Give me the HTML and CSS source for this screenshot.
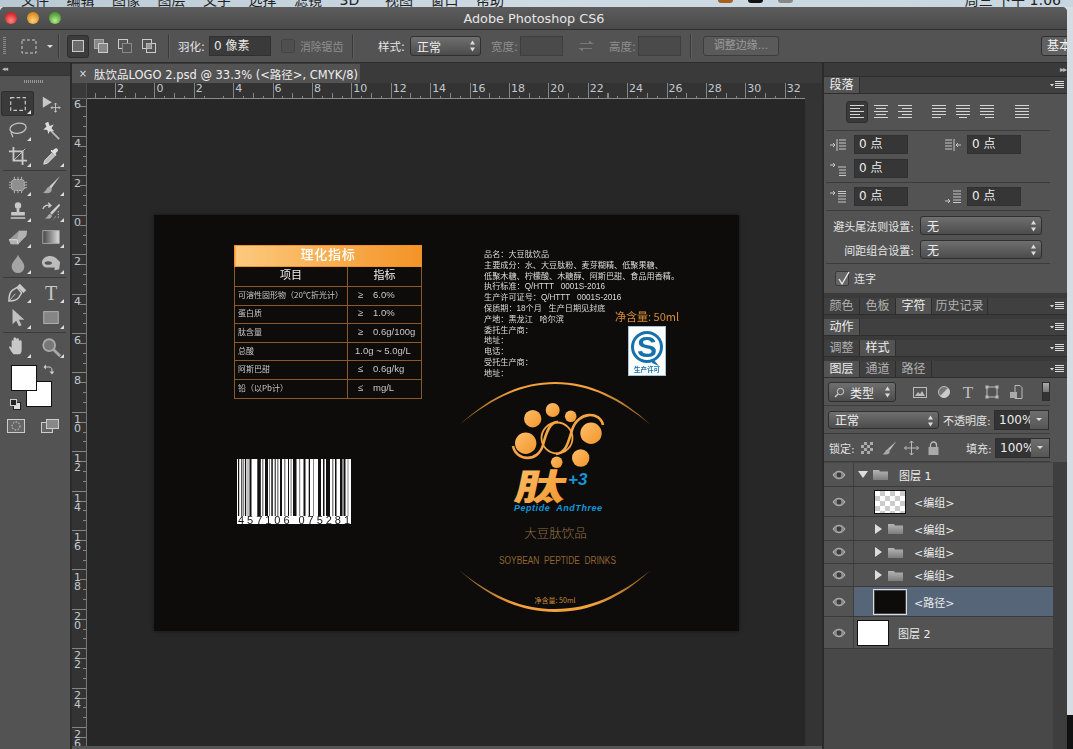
FILE: index.html
```html
<!DOCTYPE html>
<html lang="zh">
<head>
<meta charset="utf-8">
<title>Adobe Photoshop CS6</title>
<link rel="stylesheet" href="styles.css">
</head>
<body>
<svg class="defs" width="0" height="0">
  <defs>
    <linearGradient id="gOrange" x1="0" y1="0" x2="1" y2="1"><stop offset="0" stop-color="#fdbf6a"/><stop offset="1" stop-color="#f3952b"/></linearGradient>
    <linearGradient id="gFolder" x1="0" y1="0" x2="0" y2="1"><stop offset="0" stop-color="#b4b4b4"/><stop offset="1" stop-color="#7d7d7d"/></linearGradient>
    <linearGradient id="gGrad" x1="0" y1="0" x2="1" y2="0"><stop offset="0" stop-color="#444"/><stop offset="1" stop-color="#ddd"/></linearGradient>
    <linearGradient id="gArc" x1="0" y1="0" x2="1" y2="0"><stop offset="0" stop-color="#8a5a22"/><stop offset=".3" stop-color="#f4a23c"/><stop offset=".7" stop-color="#f4a23c"/><stop offset="1" stop-color="#8a5a22"/></linearGradient>
    <symbol id="menu" viewBox="0 0 14 8"><path d="M0 3h4L2 5.500z" fill="#ddd"/><path d="M5 .5h9M5 2.500h9M5 4.500h9M5 6.500h9" stroke="#ddd" stroke-width="1"/></symbol>
    <symbol id="updown" viewBox="0 0 7 12"><path d="M3.500 .5 6 4.500H1zM3.500 11.500 1 7.500h5z" fill="#ddd"/></symbol>
    <symbol id="eye" viewBox="0 0 14 10"><path d="M1 5c3-5 9-5 12 0-3 5-9 5-12 0z" fill="#8d8d8d" stroke="#b5b5b5"/><circle cx="7" cy="5" r="2.400" fill="#3d3d3d"/></symbol>
    <symbol id="folder" viewBox="0 0 15 11"><path d="M0 1h6l1 1.500h8V11H0z" fill="url(#gFolder)"/></symbol>
  </defs>
</svg>

<div class="desk-menu">
  <span>文件</span><span>编辑</span><span>图像</span><span>图层</span><span>文字</span><span>选择</span><span>滤镜</span><span>3D</span><span>视图</span><span>窗口</span><span>帮助</span>
  <div class="desk-status"><i class="st-orange"></i><i class="st-black"></i><i class="st-gray"></i><b>周三 下午 1:06</b></div>
</div>

<div class="screen">
<div class="window">
  <header class="titlebar">
    <div class="lights"><i class="red"></i><i class="amber"></i><i class="green"></i></div>
    <h1>Adobe Photoshop CS6</h1>
  </header>

  <div class="options">
    <i class="grip"></i>
    <svg class="op-marquee" width="16" height="15" viewBox="0 0 16 15"><rect x="1" y="1" width="14" height="13" fill="none" stroke="#ccc" stroke-dasharray="3 2"/></svg>
    <i class="op-caret"></i>
    <i class="vsep s1"></i>
    <span class="op-btn on"><svg width="12" height="12" viewBox="0 0 12 12"><rect x=".5" y=".5" width="11" height="11" fill="#6a6a6a" stroke="#ccc"/></svg></span>
    <span class="op-btn"><svg width="14" height="14" viewBox="0 0 14 14"><rect x=".5" y=".5" width="9" height="9" fill="#888" stroke="#aaa"/><rect x="4.500" y="4.500" width="9" height="9" fill="#888" stroke="#ccc"/></svg></span>
    <span class="op-btn"><svg width="14" height="14" viewBox="0 0 14 14"><rect x=".5" y=".5" width="9" height="9" fill="#555" stroke="#ccc"/><rect x="4.500" y="4.500" width="9" height="9" fill="#535353" stroke="#888"/></svg></span>
    <span class="op-btn"><svg width="14" height="14" viewBox="0 0 14 14"><rect x=".5" y=".5" width="9" height="9" fill="none" stroke="#ccc"/><rect x="4.500" y="4.500" width="9" height="9" fill="none" stroke="#ccc"/><rect x="4.500" y="4.500" width="5" height="5" fill="#999"/></svg></span>
    <i class="vsep s2"></i>
    <label class="op-label feather">羽化:</label>
    <span class="op-input w-feather">0 像素</span>
    <i class="op-check"></i>
    <span class="op-label dim aa">消除锯齿</span>
    <i class="vsep s3"></i>
    <label class="op-label style">样式:</label>
    <span class="select w-style">正常<svg class="ud" width="7" height="12"><use href="#updown"/></svg></span>
    <span class="op-label dim wd">宽度:</span>
    <span class="op-input w-size off"></span>
    <svg class="swap" width="18" height="14" viewBox="0 0 18 14"><path d="M3 4h9V1.500L17 5l-5 0H3zM15 10H6v2.500L1 9l5 0h9z" fill="#777"/></svg>
    <span class="op-label dim ht">高度:</span>
    <span class="op-input w-size off"></span>
    <i class="vsep s4"></i>
    <span class="op-button">调整边缘...</span>
    <span class="op-work">基本</span>
  </div>

  <div class="main">
    <aside class="toolbar">
      <div class="tb-top">◂◂</div>
      <i class="tb-grip"></i>
      <div class="tools">
        <span class="tool on"><svg viewBox="0 0 22 22"><rect x="3" y="4" width="16" height="14" fill="none" stroke="#ccc" stroke-width="1.300" stroke-dasharray="4 2.500"/></svg></span>
        <span class="tool bare"><svg viewBox="0 0 22 22"><path d="M2 3l10 6-10 6z" fill="#c8c8c8"/><path d="M16 10v10M11 15h10M14.500 11.500 16 10l1.500 1.500M14.500 18.500 16 20l1.500-1.500M12.500 13.500 11 15l1.500 1.500M19.500 13.500 21 15l-1.500 1.500" stroke="#ccc" fill="none"/></svg></span>
        <span class="tool"><svg viewBox="0 0 22 22"><ellipse cx="11" cy="9" rx="9" ry="5.500" transform="rotate(-10 11 9)" fill="none" stroke="#c4c4c4" stroke-width="1.400"/><path d="M4 13c-2 3 2 3 1 6" fill="none" stroke="#c4c4c4" stroke-width="1.400"/></svg></span>
        <span class="tool bare"><svg viewBox="0 0 22 22"><path d="M9 10l11 11" stroke="#bbb" stroke-width="2"/><path d="M8 2l1.500 4.500L14 5l-2.500 4 3 3.500-4.500-.7L8 15.500 7 11l-4.500-.5L6 7.500 4.500 3.500z" fill="#ddd"/></svg></span>
        <span class="tool"><svg viewBox="0 0 22 22"><path d="M6 1v15h15M1 6h15v15" fill="none" stroke="#c8c8c8" stroke-width="2"/><path d="M6 16 19 3" stroke="#c8c8c8"/></svg></span>
        <span class="tool"><svg viewBox="0 0 22 22"><path d="M3 20l1-4 8-8 3 3-8 8z" fill="#bbb" stroke="#e0e0e0"/><path d="M11 6l5 5 1-1-1-2 2-2c2-2-1-5-3-3l-2 2-2-1z" fill="#e0e0e0"/></svg></span>
        <i class="t-sep"></i>
        <span class="tool"><svg viewBox="0 0 22 22"><rect x="4" y="5" width="14" height="12" rx="3" fill="#8f8f8f" stroke="#c8c8c8" stroke-dasharray="2 1"/><path d="M7 2v3M11 2v3M15 2v3M7 17v3M11 17v3M15 17v3M1 8h3M1 11h3M1 14h3M18 8h3M18 11h3M18 14h3" stroke="#bbb"/></svg></span>
        <span class="tool"><svg viewBox="0 0 22 22"><path d="M21 1 9 13l2 2z" fill="#d0d0d0"/><path d="M9 13c-4 1-2 5-7 6 5 2 10 1 10-4z" fill="#a8a8a8"/></svg></span>
        <span class="tool"><svg viewBox="0 0 22 22"><circle cx="11" cy="5" r="3.500" fill="#c8c8c8"/><path d="M9.500 8h3v4h6v4H3.500v-4h6zM3 18h16v1.500H3z" fill="#c8c8c8"/></svg></span>
        <span class="tool"><svg viewBox="0 0 22 22"><path d="M20 3 10 13l2 2L21 5z" fill="#d0d0d0"/><path d="M10 14c-3 1-2 4-6 5 4 1 8 1 8-3z" fill="#aaa"/><path d="M2 9c1-4 5-5 8-4M8 2l3 3-3 2" fill="none" stroke="#ccc" stroke-width="1.400"/><path d="M19 11v8M16 17l-2 3" stroke="#ccc" stroke-dasharray="1.500 1.500"/></svg></span>
        <span class="tool"><svg viewBox="0 0 22 22"><path d="M1 14 12 4h9l-1 6-9 9H3z" fill="#9a9a9a"/><path d="M1 14h9l2-10h9l-1 6-9 9H3z" fill="#bcbcbc" opacity=".7"/><path d="M1 14h9l1 5" fill="none" stroke="#e0e0e0"/></svg></span>
        <span class="tool"><svg viewBox="0 0 22 22"><rect x="2" y="4" width="18" height="14" fill="url(#gGrad)" stroke="#aaa"/></svg></span>
        <span class="tool"><svg viewBox="0 0 22 22"><path d="M11 2c2 5 7 8 7 13a7 7 0 0 1-14 0c0-5 5-8 7-13z" fill="#a4a4a4"/></svg></span>
        <span class="tool"><svg viewBox="0 0 22 22"><path d="M1 10c1-6 8-8 13-6 3 1 5 4 7 6l-1 8-5 1v-3H6c-3 0-5-3-5-6z" fill="#bdbdbd"/><ellipse cx="8" cy="11" rx="4" ry="2" fill="#555"/></svg></span>
        <i class="t-sep"></i>
        <span class="tool"><svg viewBox="0 0 22 22"><path d="M1 21c0-5 1-10 4-12l5-3 5 6-3 5c-2 3-6 4-11 4z" fill="none" stroke="#d0d0d0" stroke-width="1.500"/><path d="M1 21 8 13" stroke="#d0d0d0"/><path d="M10 5l3-3 7 7-3 3z" fill="#c8c8c8"/></svg></span>
        <span class="tool"><svg viewBox="0 0 22 22"><text class="t-glyph" x="11" y="20" text-anchor="middle">T</text></svg></span>
        <span class="tool"><svg viewBox="0 0 22 22"><path d="M5 1v17l4-4 3 6 3-1-3-6h6z" fill="#c0c0c0"/></svg></span>
        <span class="tool"><svg viewBox="0 0 22 22"><rect x="3" y="4" width="16" height="13" fill="#858585" stroke="#b5b5b5"/></svg></span>
        <i class="t-sep"></i>
        <span class="tool"><svg viewBox="0 0 22 22"><path d="M6 19c-2-2-4-6-5-8 0-1 2-1 3 1V5c0-2 2-2 2 0V2c0-2 3-2 3 0v1c0-2 3-2 3 0v2c0-2 3-2 3 0v9c0 3-1 4-2 5z" fill="#c8c8c8"/></svg></span>
        <span class="tool"><svg viewBox="0 0 22 22"><circle cx="9" cy="9" r="6.500" fill="#777" stroke="#aaa" stroke-width="2"/><path d="M14 14l7 7" stroke="#aaa" stroke-width="3"/></svg></span>
      </div>
      <div class="swatches">
        <i class="sw-bg"></i><i class="sw-fg"></i>
        <svg class="sw-swap" width="11" height="11" viewBox="0 0 11 11"><path d="M1 3h5c2 0 3 1 3 3v2" fill="none" stroke="#ccc"/><path d="M3 .5v5L.5 3zM6.500 7.500h5L9 10.500z" fill="#ccc"/></svg>
        <i class="sw-d1"></i><i class="sw-d2"></i>
      </div>
      <div class="tb-modes">
        <svg width="18" height="14" viewBox="0 0 18 14"><rect x=".5" y=".5" width="17" height="13" fill="#666" stroke="#ccc"/><circle cx="9" cy="7" r="4" fill="none" stroke="#ddd" stroke-dasharray="1.500 1.500"/></svg>
        <svg width="18" height="14" viewBox="0 0 18 14"><rect x=".5" y="3.500" width="11" height="10" fill="#666" stroke="#ccc"/><rect x="5.500" y=".5" width="12" height="9" fill="#888" stroke="#ccc"/></svg>
      </div>
    </aside>

    <section class="docarea">
      <div class="doctabs">
        <div class="doctab"><i>×</i><span>肽饮品LOGO 2.psd @ 33.3% (&lt;路径&gt;, CMYK/8)</span></div>
      </div>
      <div class="hrow">
        <i class="corner"></i>
        <div class="hruler">
          <span>2</span><span>0</span><span>2</span><span>4</span><span>6</span><span>8</span><span>10</span><span>12</span><span>14</span><span>16</span><span>18</span><span>20</span><span>22</span><span>24</span><span>26</span><span>28</span><span>30</span><span>32</span>
        </div>
        <i class="hrest"></i>
      </div>
      <div class="work">
        <div class="vruler">
          <span>6</span><span>4</span><span>2</span><span>0</span><span>2</span><span>4</span><span>6</span><span>8</span><span>1<br>0</span><span>1<br>2</span><span>1<br>4</span><span>1<br>6</span><span>1<br>8</span><span>2<br>0</span><span>2<br>2</span><span>2<br>4</span><span>2<br>6</span>
        </div>
        <div class="canvas">
          <div class="doc">
            <table class="spec">
              <colgroup><col class="c1"><col class="c2"></colgroup>
              <thead>
                <tr><th colspan="2" class="spec-title">理化指标</th></tr>
                <tr class="spec-head"><th>项目</th><th>指标</th></tr>
              </thead>
              <tbody>
                <tr><td>可溶性固形物（20℃折光计）</td><td class="v"><em>≥</em>6.0%</td></tr>
                <tr><td>蛋白质</td><td class="v"><em>≥</em>1.0%</td></tr>
                <tr><td>肽含量</td><td class="v"><em>≥</em>0.6g/100g</td></tr>
                <tr><td>总酸</td><td class="r">1.0g ~ 5.0g/L</td></tr>
                <tr><td>阿斯巴甜</td><td class="v"><em>≤</em>0.6g/kg</td></tr>
                <tr><td>铅（以Pb计）</td><td class="v"><em>≤</em>mg/L</td></tr>
              </tbody>
            </table>

            <div class="info">
              <p>品名：大豆肽饮品</p>
              <p>主要成分：水、大豆肽粉、麦芽糊精、低聚果糖、</p>
              <p>低聚木糖、柠檬酸、木糖醇、阿斯巴甜、食品用香精。</p>
              <p>执行标准：Q/HTTT&nbsp;&nbsp; 0001S-2016</p>
              <p>生产许可证号：Q/HTTT&nbsp;&nbsp; 0001S-2016</p>
              <p>保质期：18个月&nbsp;&nbsp; 生产日期见封底</p>
              <p>产地：黑龙江&nbsp;&nbsp;&nbsp;哈尔滨</p>
              <p>委托生产商：</p>
              <p>地址：</p>
              <p>电话：</p>
              <p>受托生产商：</p>
              <p>地址：</p>
            </div>

            <div class="net">净含量: 50ml</div>

            <svg class="qs" viewBox="0 0 38 50">
              <rect x=".5" y=".5" width="37" height="49" fill="#fff" stroke="#9fc4dc"/>
              <circle cx="19" cy="21" r="14.500" fill="#fff" stroke="#1571ab" stroke-width="3"/>
              <path d="M25 33l6 7-7-3z" fill="#1571ab"/>
              <text class="qs-s" x="19" y="31" text-anchor="middle">S</text>
              <text class="qs-t" x="19" y="46" text-anchor="middle">生产许可</text>
            </svg>

            <svg class="barcode" viewBox="0 0 114 65">
              <rect width="114" height="65" fill="#fff"/>
              <g fill="#111">
                <rect x="1" width="1.200" height="57"/><rect x="4.300" width="1" height="57"/><rect x="8" width="1.200" height="57"/><rect x="12.500" width="2" height="57"/><rect x="20.300" width="3.500" height="57"/><rect x="28" width="3" height="57"/><rect x="34.300" width="1.500" height="57"/><rect x="37.700" width="1" height="57"/><rect x="43" width="2" height="57"/><rect x="51" width="1" height="57"/><rect x="56" width="3.500" height="57"/><rect x="66.500" width="2" height="57"/><rect x="71.700" width="1.300" height="57"/><rect x="81" width="3" height="57"/><rect x="86" width="1.500" height="57"/><rect x="89" width="4" height="57"/><rect x="98" width="1.500" height="57"/><rect x="103" width="2.500" height="57"/><rect x="106.500" width="2" height="57"/>
              </g>
              <g fill="#888">
                <rect x="6" width="1.200" height="57"/><rect x="10.500" width="1" height="57"/><rect x="25" width="1.500" height="57"/><rect x="32" width="1" height="57"/><rect x="40" width="1.500" height="57"/><rect x="47" width="1.500" height="57"/><rect x="53.500" width="1.200" height="57"/><rect x="62" width="1.200" height="57"/><rect x="76" width="1" height="57"/><rect x="95" width="1.500" height="57"/><rect x="110.500" width="1" height="57"/>
              </g>
              <text class="bc-num" x="1" y="65" textLength="112">457106 075281</text>
            </svg>

            <svg class="mark" viewBox="0 0 210 240">
              <path d="M9 50C40 22 70 7 105 7c35 0 66 15 96 43C170 25 140 9 105 9 70 9 40 25 9 50z" fill="url(#gArc)"/>
              <path d="M9 195c31 25 61 39 96 39 35 0 65-14 96-39-30 28-61 42-96 42-35 0-65-14-96-42z" fill="url(#gArc)"/>
              <g fill="none" stroke="#f5a543">
                <path d="M63 71c3 15 25 17 30-1 3-12 7-24 15-23" stroke-width="2.600"/>
                <path d="M153 50c-3-14-25-14-31 5-4 13-6 23-16 24" stroke-width="2.600"/>
                <circle cx="107" cy="63" r="15.500" stroke-width="1.800"/>
              </g>
              <g fill="url(#gOrange)">
                <circle cx="82.700" cy="43.700" r="8.700"/><circle cx="102.700" cy="35" r="7"/><circle cx="120.700" cy="41.300" r="5.800"/><circle cx="141" cy="58.300" r="10.700"/><circle cx="75.700" cy="68.300" r="10.700"/><circle cx="130.700" cy="83" r="8.700"/><circle cx="106.700" cy="87.300" r="5.800"/>
              </g>
              <text class="m-char" x="0" y="0" transform="translate(63 125) skewX(-12) scale(1.150 .82)">肽</text>
              <text class="m-plus" x="118" y="110">+3</text>
              <text class="m-en" x="64" y="136" textLength="88">Peptide&#160;&#160;AndThree</text>
              <text class="m-cn" x="105.500" y="163" text-anchor="middle">大豆肽饮品</text>
              <text class="m-soy" x="49" y="189" textLength="117" lengthAdjust="spacingAndGlyphs">SOYBEAN&#160;&#160;PEPTIDE&#160;&#160;DRINKS</text>
              <text class="m-net" x="105" y="228" text-anchor="middle">净含量: 50ml</text>
            </svg>
          </div>
        </div>
        <i class="scrollcol"></i>
      </div>
      <i class="docfoot"></i>
    </section>

    <aside class="dock">
      <div class="dock-top">▸▸</div>

      <div class="group g-para">
        <div class="tabs"><span class="tab on">段落</span><svg class="pmenu"><use href="#menu"/></svg></div>
        <div class="body">
          <div class="p-align psec">
            <span class="al on"><svg viewBox="0 0 14 16"><path d="M0 1.500h14M0 4.500h10M0 7.500h14M0 10.500h10M0 13.500h14"/></svg></span>
            <span class="al"><svg viewBox="0 0 14 16"><path d="M0 1.500h14M2 4.500h10M0 7.500h14M2 10.500h10M0 13.500h14"/></svg></span>
            <span class="al"><svg viewBox="0 0 14 16"><path d="M0 1.500h14M4 4.500h10M0 7.500h14M4 10.500h10M0 13.500h14"/></svg></span>
            <span class="al gap"><svg viewBox="0 0 14 16"><path d="M0 1.500h14M0 4.500h14M0 7.500h14M0 10.500h14M0 13.500h9"/></svg></span>
            <span class="al"><svg viewBox="0 0 14 16"><path d="M0 1.500h14M0 4.500h14M0 7.500h14M0 10.500h14M3 13.500h8"/></svg></span>
            <span class="al"><svg viewBox="0 0 14 16"><path d="M0 1.500h14M0 4.500h14M0 7.500h14M0 10.500h14M5 13.500h9"/></svg></span>
            <span class="al gap2"><svg viewBox="0 0 14 16"><path d="M0 1.500h14M0 4.500h14M0 7.500h14M0 10.500h14M0 13.500h14"/></svg></span>
          </div>
          <div class="psec p-rows">
            <div class="prow">
              <svg class="pi" viewBox="0 0 16 14"><path d="M0 7h5M3 5l2 2-2 2M7 1v12M9 2h7M9 5h7M9 8h7M9 11h7" /></svg>
              <span class="num">0 点</span>
              <svg class="pi right" viewBox="0 0 16 14"><path d="M0 2h7M0 5h7M0 8h7M0 11h7M9 1v12M16 7h-5M13 5l-2 2 2 2"/></svg>
              <span class="num">0 点</span>
            </div>
            <div class="prow">
              <svg class="pi" viewBox="0 0 16 14"><path d="M0 3h5M3 1l2 2-2 2M8 5h8M9 8h7M9 11h7M9 13.500h7"/></svg>
              <span class="num">0 点</span>
            </div>
          </div>
          <div class="psec p-rows">
            <div class="prow">
              <svg class="pi" viewBox="0 0 16 14"><path d="M0 3h5M3 1l2 2-2 2M8 1.500h8M8 3.500h8M8 6h8M8 9h8M8 12h8"/></svg>
              <span class="num">0 点</span>
              <svg class="pi right" viewBox="0 0 16 14"><path d="M8 1h8M8 4h8M8 7h8M8 10h8M8 12.500h8M0 11h5M3 9l2 2-2 2"/></svg>
              <span class="num">0 点</span>
            </div>
          </div>
          <div class="psec p-sels">
            <div class="srow"><label>避头尾法则设置:</label><span class="select w-p">无<svg class="ud" width="7" height="12"><use href="#updown"/></svg></span></div>
            <div class="srow"><label>间距组合设置:</label><span class="select w-p">无<svg class="ud" width="7" height="12"><use href="#updown"/></svg></span></div>
          </div>
          <div class="p-check">
            <span class="check"><svg width="14" height="14" viewBox="0 0 14 14"><path d="M3 7l3 5 7-12" fill="none" stroke="#e8e8e8" stroke-width="1.400"/></svg></span>
            <label>连字</label>
          </div>
        </div>
      </div>

      <div class="tabs tgroup tfirst"><span class="tab">颜色</span><span class="tab">色板</span><span class="tab on">字符</span><span class="tab wide">历史记录</span><svg class="pmenu"><use href="#menu"/></svg></div>
      <div class="tabs tgroup"><span class="tab on">动作</span><svg class="pmenu"><use href="#menu"/></svg></div>
      <div class="tabs tgroup"><span class="tab">调整</span><span class="tab on">样式</span><svg class="pmenu"><use href="#menu"/></svg></div>

      <div class="group g-layers">
        <div class="tabs"><span class="tab on">图层</span><span class="tab">通道</span><span class="tab">路径</span><svg class="pmenu"><use href="#menu"/></svg></div>
        <div class="body">
          <div class="l-filter">
            <span class="select w-kind"><svg class="loupe" width="11" height="11" viewBox="0 0 11 11"><circle cx="6.500" cy="4.500" r="3.200" fill="none" stroke="#ccc"/><path d="M4 7 1 10" stroke="#ccc" stroke-width="1.400"/></svg>类型<svg class="ud" width="7" height="12"><use href="#updown"/></svg></span>
            <svg class="fi first" viewBox="0 0 14 14"><rect x=".5" y="2.500" width="13" height="10" fill="none" stroke="#bbb"/><path d="M2 11l3-4 2 2 2-3 3 5z" fill="#bbb"/></svg>
            <svg class="fi" viewBox="0 0 14 14"><circle cx="7" cy="7" r="5.500" fill="#777" stroke="#bbb"/><path d="M3 11 11 3A5.500 5.500 0 0 1 11 11 5.500 5.500 0 0 1 3 11z" fill="#ccc"/></svg>
            <svg class="fi" viewBox="0 0 14 14"><text class="t-small" x="7" y="13" text-anchor="middle">T</text></svg>
            <svg class="fi" viewBox="0 0 14 14"><rect x="2" y="2" width="10" height="10" fill="none" stroke="#bbb"/><path d="M.5.500h3v3h-3zM10.500.500h3v3h-3zM.5 10.500h3v3h-3zM10.500 10.500h3v3h-3z" fill="#bbb"/></svg>
            <svg class="fi" viewBox="0 0 14 14"><path d="M6 .5h5l2 2v11H6z" fill="none" stroke="#bbb"/><rect x="1" y="7" width="7" height="6" fill="#aaa"/></svg>
            <span class="toggle"><i></i></span>
          </div>
          <div class="l-mode">
            <span class="select w-mode">正常<svg class="ud" width="7" height="12"><use href="#updown"/></svg></span>
            <label>不透明度:</label>
            <span class="pct">100%<i></i></span>
          </div>
          <div class="l-lock">
            <label>锁定:</label>
            <svg class="lk chk" viewBox="0 0 12 12"><path d="M0 0h12v12H0z" fill="#aaa"/><path d="M0 0h3v3H0zM6 0h3v3H6zM3 3h3v3H3zM9 3h3v3H9zM0 6h3v3H0zM6 6h3v3H6zM3 9h3v3H3zM9 9h3v3H9z" fill="#555"/></svg>
            <svg class="lk" viewBox="0 0 16 16"><path d="M16 0 6 9l2 2z" fill="#c0c0c0"/><path d="M6 9c-3 1-2 4-6 6 5 1 9 0 8-4z" fill="#aaa"/></svg>
            <svg class="lk" viewBox="0 0 14 14"><path d="M7 0v14M0 7h14M5 2l2-2 2 2M5 12l2 2 2-2M2 5 0 7l2 2M12 5l2 2-2 2" fill="none" stroke="#bbb"/></svg>
            <svg class="lk" viewBox="0 0 12 14"><path d="M3 6V4a3 3 0 0 1 6 0v2" fill="none" stroke="#bbb" stroke-width="1.300"/><rect x="1" y="6" width="10" height="8" fill="#aaa"/></svg>
            <label class="fill">填充:</label>
            <span class="pct">100%<i></i></span>
          </div>
          <div class="l-wrap">
            <div class="list">
              <div class="layer h24"><span class="eye"><svg width="14" height="10"><use href="#eye"/></svg></span><div class="lmain i0"><i class="tri-d"></i><svg class="fold" width="17" height="11" viewBox="0 0 15 11"><use href="#folder"/></svg><span class="lname n1">图层 1</span></div></div>
              <div class="layer h30"><span class="eye"><svg width="14" height="10"><use href="#eye"/></svg></span><div class="lmain i1"><i class="thumb checker"></i><span class="lname n2">&lt;编组&gt;</span></div></div>
              <div class="layer h24"><span class="eye"><svg width="14" height="10"><use href="#eye"/></svg></span><div class="lmain i2"><i class="tri-r"></i><svg class="fold" width="15" height="11"><use href="#folder"/></svg><span class="lname n3">&lt;编组&gt;</span></div></div>
              <div class="layer h23"><span class="eye"><svg width="14" height="10"><use href="#eye"/></svg></span><div class="lmain i2"><i class="tri-r"></i><svg class="fold" width="15" height="11"><use href="#folder"/></svg><span class="lname n3">&lt;编组&gt;</span></div></div>
              <div class="layer h23"><span class="eye"><svg width="14" height="10"><use href="#eye"/></svg></span><div class="lmain i2"><i class="tri-r"></i><svg class="fold" width="15" height="11"><use href="#folder"/></svg><span class="lname n3">&lt;编组&gt;</span></div></div>
              <div class="layer h30"><span class="eye"><svg width="14" height="10"><use href="#eye"/></svg></span><div class="lmain i1 sel"><i class="thumb black"></i><span class="lname n2">&lt;路径&gt;</span></div></div>
              <div class="layer h32"><span class="eye"><svg width="14" height="10"><use href="#eye"/></svg></span><div class="lmain i3"><i class="thumb white"></i><span class="lname n4">图层 2</span></div></div>
            </div>
            <i class="lscroll"></i>
          </div>
        </div>
      </div>
    </aside>
  </div>
</div>
<div class="sliver"><i></i></div>
</div>
</body>
</html>
```
FILE: styles.css
```css
* { box-sizing: border-box; }
html, body { margin: 0; height: 100%; }
body {
  width: 1073px; height: 749px; overflow: hidden; background: #d5dce2;
  font-family: "DejaVu Sans", "Noto Sans CJK SC", sans-serif;
  font-size: 12px; color: #e2e2e2; display: flex; flex-direction: column;
}
i { display: block; font-style: normal; }
.defs { position: absolute; }

/* desktop menu bar */
.desk-menu { height: 7px; flex: none; display: flex; overflow: hidden; padding-left: 21px; background: linear-gradient(90deg, #b9c9d4, #cfdbe3 50%, #c7d6df); color: #222; font-size: 14px; line-height: 9px; position: relative; }
.desk-menu > span { width: 45.5px; flex: none; margin-top: -4px; }
.desk-status { margin-left: auto; display: flex; align-items: flex-start; padding-right: 12px; }
.desk-status b { font-weight: normal; margin: -4px 0 0 48px; width: 220px; text-align: right; }
.desk-status i { width: 15px; height: 3px; margin-left: 15px; border-radius: 0 0 6px 6px; }
.st-orange { background: #a5621c; }
.st-black { background: #111; }
.st-gray { background: #888; }

.screen { display: flex; flex: 1; min-height: 0; }
.sliver { flex: 1; display: flex; flex-direction: column; justify-content: flex-end; }
.sliver i { height: 34px; background: #111; }
.window { width: 1067px; display: flex; flex-direction: column; background: #535353; border-radius: 5px 5px 0 0; overflow: hidden; }

/* title */
.titlebar { height: 23px; flex: none; display: flex; align-items: center; justify-content: center; position: relative; background: linear-gradient(#5c5c5c, #4a4a4a); border-bottom: 1px solid #2f2f2f; }
.titlebar h1 { margin: 1px 0 0 1px; font-size: 12.800px; font-weight: normal; color: #e6e6e6; }
.lights { position: absolute; left: 5px; top: 5px; display: flex; gap: 10px; }
.lights i { width: 12px; height: 12px; border-radius: 50%; }
.red { background: radial-gradient(circle at 50% 70%, #ff8a80, #d8232a 70%); }
.amber { background: radial-gradient(circle at 50% 70%, #ffd27a, #d98a1e 70%); }
.green { background: radial-gradient(circle at 50% 70%, #b6ec8f, #4d9c35 70%); }

/* options */
.options { height: 33px; flex: none; display: flex; align-items: center; background: #535353; border-bottom: 1px solid #2d2d2d; font-size: 11px; }
.grip { width: 3px; height: 18px; margin-left: 3px; background: repeating-linear-gradient(#8a8a8a 0 1px, transparent 1px 2px); }
.op-marquee { margin-left: 15px; }
.op-caret { margin-left: 10px; border: 3px solid transparent; border-top: 3px solid #ddd; margin-top: 3px; }
.vsep { width: 2px; height: 24px; background: #3a3a3a; border-right: 1px solid #5f5f5f; flex: none; }
.s1 { margin-left: 5px; }
.op-btn { width: 24px; height: 23px; display: flex; align-items: center; justify-content: center; border-radius: 3px; flex: none; }
.op-btn.on { background: #3c3c3c; border: 1px solid #2e2e2e; margin-left: 7px; width: 22px; }
.s2 { margin-left: 7px; }
.op-label { width: 26px; font-size: 11.500px; color: #e6e6e6; flex: none; white-space: nowrap; }
.op-label.dim { color: #8e8e8e; }
.feather { margin-left: 8px; }
.op-input { height: 20px; margin-left: 5px; flex: none; background: #3a3a3a; border: 1px solid #303030; padding-left: 4px; line-height: 18px; font-size: 12px; color: #e6e6e6; }
.op-input.off { background: #4a4a4a; border-color: #3e3e3e; margin-left: 3px; }
.w-feather { width: 62px; }
.op-check { width: 14px; height: 14px; margin-left: 10px; border: 1px solid #444; border-radius: 2px; background: #4f4f4f; flex: none; }
.op-label.aa { width: 43px; margin-left: 5px; font-size: 10.800px; }
.s3 { margin-left: 9px; }
.style { margin-left: 24px; }
.select { display: flex; align-items: center; height: 20px; padding-left: 6px; flex: none; position: relative; background: linear-gradient(#6f6f6f, #4c4c4c); border: 1px solid #2f2f2f; border-radius: 3px; font-size: 12px; color: #eee; }
.ud { position: absolute; right: 4px; top: 3px; }
.w-style { width: 71px; margin-left: 6px; }
.wd { margin-left: 10px; }
.w-size { width: 43px; }
.swap { margin: 0 14px; flex: none; }
.s4 { margin-left: 9px; }
.op-button { width: 76px; height: 20px; margin-left: 11px; flex: none; border: 1px solid #3c3c3c; border-radius: 3px; background: #5a5a5a; color: #9a9a9a; text-align: center; line-height: 18px; font-size: 11px; }
.op-work { width: 34px; height: 20px; margin-left: auto; margin-right: -8px; flex: none; border: 1px solid #2f2f2f; border-radius: 3px; background: #616161; padding-left: 5px; line-height: 18px; color: #f0f0f0; font-size: 12px; }

.main { flex: 1; display: flex; min-height: 0; }

/* toolbar */
.toolbar { width: 70px; flex: none; background: #535353; }
.tb-top { height: 13px; background: #3a3a3a; border-bottom: 1px solid #333; color: #bbb; font-size: 7px; line-height: 12px; padding-left: 2px; letter-spacing: -1px; }
.tb-grip { width: 19px; height: 3px; margin: 4px 0 0 24px; background: repeating-linear-gradient(90deg, #999 0 1px, transparent 1px 2px); }
.tools { margin-top: 8px; display: grid; grid-template-columns: 33px 33px; padding-left: 1px; }
.t-sep { grid-column: 1 / 3; height: 1px; background: #3a3a3a; margin: 1px 1px 1px 2px; }
.tool { height: 26px; display: flex; align-items: center; justify-content: center; position: relative; }
.tool svg { width: 20px; height: 20px; }
.tool::after { content: ""; position: absolute; right: 3px; bottom: 2px; border: 2px solid transparent; border-right-color: #ddd; border-bottom-color: #ddd; }
.tool.bare::after { display: none; }
.tool.on { background: #3a3a3a; border-radius: 3px; outline: 1px solid #2e2e2e; outline-offset: -1px; height: 25px; margin-bottom: 1px; }
.t-glyph { font: 22px "Liberation Serif", serif; fill: #c8c8c8; }
.t-small { font: 17px "Liberation Serif", serif; fill: #c0c0c0; }
.swatches { position: relative; height: 54px; margin-top: 5px; }
.sw-fg, .sw-bg { position: absolute; width: 26px; height: 26px; background: #fff; border: 1px solid #111; }
.sw-fg { left: 11px; top: 0; }
.sw-bg { left: 26px; top: 16px; }
.sw-swap { position: absolute; left: 43px; top: -1px; }
.sw-d1, .sw-d2 { position: absolute; width: 7px; height: 7px; }
.sw-d2 { left: 13px; top: 37px; background: #ddd; border: 1px solid #222; width: 8px; height: 8px; }
.sw-d1 { left: 10px; top: 34px; background: #222; border: 1px solid #ccc; z-index: 1; }
.tb-modes { display: flex; gap: 16px; padding-left: 7px; }

/* document area */
.docarea { width: 754px; flex: none; display: flex; flex-direction: column; background: #333; border-left: 2px solid #2b2b2b; border-right: 2px solid #2b2b2b; }
.doctabs { height: 20px; flex: none; background: #3a3a3a; padding-top: 1px; }
.doctab { width: 288px; height: 19px; background: #535353; display: flex; align-items: center; font-size: 11.500px; color: #eee; white-space: nowrap; }
.doctab i { width: 22px; flex: none; text-align: center; font-size: 10px; color: #ddd; }
.hrow { height: 16px; flex: none; display: flex; }
.corner { width: 15px; background: #3a3a3a; border-right: 1px solid #4c4c4c; border-bottom: 1px solid #666; flex: none; }
.hruler {
  width: 718px; flex: none; display: flex; padding-left: 28px; background-color: #333; overflow: hidden;
  font-size: 11px; color: #c2c8d0; line-height: 12px;
  background-image:
    linear-gradient(#8a8a8a, #8a8a8a),
    repeating-linear-gradient(90deg, transparent 0 28px, #858585 28px 29px, transparent 29px 39.4px),
    repeating-linear-gradient(90deg, transparent 0 8.3px, #858585 8.3px 9.3px, transparent 9.3px 39.4px),
    repeating-linear-gradient(90deg, transparent 0 8.3px, #858585 8.3px 9.3px, transparent 9.3px 9.85px);
  background-size: 100% 1px, 100% 100%, 100% 6px, 100% 3px;
  background-position: bottom; background-repeat: no-repeat;
}
.hruler span { width: 39.4px; flex: none; padding-left: 2px; }
.hrest { flex: 1; background: #333; }
.work { flex: 1; display: flex; min-height: 0; }
.vruler {
  width: 15px; flex: none; overflow: hidden; background-color: #333; border-right: 1px solid #777;
  font-size: 11px; line-height: 9px; color: #c2c8d0;
  background-image:
    repeating-linear-gradient(transparent 0 37px, #858585 37px 38px, transparent 38px 39.4px),
    repeating-linear-gradient(transparent 0 7.5px, #858585 7.5px 8.5px, transparent 8.5px 39.4px),
    repeating-linear-gradient(transparent 0 7.5px, #858585 7.5px 8.5px, transparent 8.5px 9.85px);
  background-size: 100% 100%, 6px 100%, 3px 100%;
  background-position: right; background-repeat: no-repeat;
}
.vruler span { display: block; height: 39.4px; padding: 3px 0 0 2px; }
.vruler span:first-child { margin-top: -2.200px; }
.canvas { width: 718px; flex: none; background: #272727; padding: 116px 0 0 67px; overflow: hidden; }
.scrollcol { flex: 1; background: #343434; }
.docfoot { height: 3px; flex: none; background: #555; }

/* artboard */
.doc { width: 585px; height: 416px; background: #0d0c0b; position: relative; box-shadow: 0 0 4px rgba(0,0,0,.5); font-family: "Noto Sans CJK SC", sans-serif; }
.spec { position: absolute; left: 80px; top: 30px; width: 187px; height: 153px; border-collapse: collapse; table-layout: fixed; font-size: 8px; color: #c8c8c8; filter: blur(.3px); }
.c1 { width: 113px; }
.c2 { width: 74px; }
.spec th, .spec td { border: 1px solid #8a5a2b; padding: 0; font-weight: normal; white-space: nowrap; overflow: hidden; }
.spec th.spec-title { height: 21px; padding-bottom: 4px; line-height: 16px; background: linear-gradient(90deg, #fdc97f, #f7a948 60%, #f39327); color: #fff; font-size: 13px; letter-spacing: .8px; border: 1px solid #f39327; font-weight: 500; }
.spec-head th { color: #eee; font-size: 11px; height: 20px; padding-bottom: 4px; line-height: 15px; }
.spec td { padding-left: 3px; height: 18.600px; line-height: 12px; padding-bottom: 2px; }
.spec td.v { font: 9.500px/12px "Liberation Sans", "Noto Sans CJK SC", sans-serif; padding-left: 10px; }
.spec td.v em { font-style: normal; display: inline-block; width: 15px; }
.spec td.r { font: 9.500px/12px "Liberation Sans", sans-serif; padding-left: 7px; }
.info { position: absolute; left: 330px; top: 35px; font: 8.150px/10.800px "Liberation Sans", "Noto Sans CJK SC", sans-serif; color: #ddd; white-space: nowrap; filter: blur(.25px); }
.info p { margin: 0; }
.net { position: absolute; left: 461px; top: 95px; font-size: 11px; line-height: 13px; color: #d58c35; white-space: nowrap; filter: blur(.2px); }
.qs { position: absolute; left: 474px; top: 111px; width: 38px; height: 50px; filter: blur(.2px); }
.qs-s { font: bold 30px "Liberation Sans", sans-serif; fill: #1571ab; }
.qs-t { font: bold 6.500px "Noto Sans CJK SC", sans-serif; fill: #1571ab; }
.barcode { position: absolute; left: 83px; top: 244px; width: 114px; height: 65px; filter: blur(.35px); }
.bc-num { font: 11px "Liberation Sans", sans-serif; fill: #111; }
.mark { position: absolute; left: 296px; top: 160px; width: 210px; height: 240px; }
.m-char { font: 900 44px "Noto Sans CJK SC", sans-serif; fill: url(#gOrange); }
.m-plus { font: bold italic 17px "Liberation Sans", sans-serif; fill: #1196d8; }
.m-en { font: italic bold 9px "Liberation Sans", sans-serif; fill: #1196d8; }
.m-cn { font: 300 12.500px "Noto Sans CJK SC", sans-serif; fill: #94703f; }
.m-soy { font: 10px "Liberation Sans", sans-serif; fill: #8f6430; }
.m-net { font: 7px "Noto Sans CJK SC", sans-serif; fill: #c98a3c; }

/* dock */
.dock { flex: 1; min-width: 0; background: #3a3a3a; display: flex; flex-direction: column; }
.dock-top { height: 14px; flex: none; text-align: right; font-size: 8px; line-height: 14px; color: #bbb; padding-right: 1px; letter-spacing: -1px; background: #3a3a3a; border-bottom: 1px solid #2e2e2e; }
.tabs { height: 17px; flex: none; display: flex; background: #404040; border-bottom: 1px solid #2e2e2e; position: relative; font-size: 12px; line-height: 17px; }
.tab { width: 36px; flex: none; text-align: center; color: #b0b0b0; border-right: 1px solid #2e2e2e; }
.tab.wide { width: 56px; }
.tab.on { background: #535353; color: #eee; }
.pmenu { position: absolute; right: 3px; top: 4px; width: 14px; height: 8px; }
.tgroup { margin-top: 4px; }
.tfirst { margin-top: 5px; }
.body { background: #535353; }
.psec { border-bottom: 1px solid #3c3c3c; margin: 0 17px 0 2px; }
.g-para .body { height: 199px; }

.p-align { height: 37px; display: flex; align-items: flex-start; padding: 7px 0 0 20px; gap: 2px; }
.al { width: 22px; height: 22px; display: flex; align-items: center; justify-content: center; flex: none; }
.al.on { background: #3a3a3a; border: 1px solid #2e2e2e; border-radius: 3px; }
.al svg { width: 14px; height: 16px; stroke: #d5d5d5; fill: none; stroke-width: 1; }
.al.gap { margin-left: 10px; }
.al.gap2 { margin-left: 11px; }
.p-rows { padding: 4px 0 4px 4px; display: flex; flex-direction: column; gap: 5px; }
.prow { display: flex; align-items: center; height: 19px; }
.pi { width: 16px; height: 14px; margin-right: 8px; flex: none; stroke: #c8c8c8; fill: none; stroke-width: 1; }
.pi.right { margin: 0 6px 0 37px; }
.num { width: 54px; height: 19px; flex: none; background: #363636; border: 1px solid #303030; padding-left: 4px; line-height: 17px; color: #eee; font-size: 12px; }
.p-sels { padding: 5px 0 4px; display: flex; flex-direction: column; gap: 5px; }
.srow { display: flex; align-items: center; justify-content: flex-end; height: 19px; padding-right: 8px; }
.srow label { font-size: 11px; margin-right: 6px; color: #e6e6e6; }
.w-p { width: 122px; height: 19px; }
.p-check { display: flex; align-items: center; height: 28px; padding-left: 11px; font-size: 11px; }
.check { width: 14px; height: 15px; background: #666; border: 1px solid #3a3a3a; border-radius: 2px; margin-right: 5px; display: block; }
.check svg { display: block; }

.g-layers { margin-top: 4px; flex: 1; display: flex; flex-direction: column; min-height: 0; }
.g-layers .body { flex: 1; display: flex; flex-direction: column; min-height: 0; }
.l-filter { height: 28px; flex: none; display: flex; align-items: flex-start; padding: 4px 0 0 4px; border-bottom: 1px solid #3c3c3c; margin-right: 17px; }
.w-kind { width: 68px; padding-left: 5px; gap: 5px; }
.loupe { flex: none; }
.fi { width: 14px; height: 14px; margin: 3px 10px 0 0; flex: none; }
.fi.first { margin-left: 17px; }
.toggle { width: 11px; height: 19px; margin-left: 9px; background: #333; border: 1px solid #2e2e2e; display: block; }
.toggle i { height: 9px; background: linear-gradient(#aaa, #777); }
.l-mode, .l-lock { display: flex; align-items: center; flex: none; font-size: 11px; margin-right: 17px; }
.l-mode { height: 28px; padding-left: 4px; border-bottom: 1px solid #3c3c3c; }
.w-mode { width: 111px; height: 18px; }
.l-mode label { margin-left: 4px; width: 51px; white-space: nowrap; }
.pct { width: 55px; height: 20px; flex: none; position: relative; background: #333; border: 1px solid #2e2e2e; padding-left: 4px; line-height: 18px; color: #eee; font-size: 12px; }
.pct i { position: absolute; right: 0; top: 0; width: 18px; height: 18px; background: linear-gradient(#6f6f6f, #565656); }
.pct i::after { content: ""; position: absolute; left: 6px; top: 7px; border: 3px solid transparent; border-top-color: #ddd; }
.l-lock { height: 28px; padding-left: 5px; border-bottom: 1px solid #3c3c3c; }
.lk { height: 14px; width: 15px; margin-left: 7px; flex: none; }
.lk.chk { width: 12px; height: 12px; margin-left: 5px; margin-right: 2px; }
.l-lock label.fill { margin-left: auto; width: 29px; }
.l-lock label { white-space: nowrap; }
.l-lock label:first-child { width: 27px; }

.l-wrap { flex: 1; display: flex; min-height: 0; }
.list { width: 229px; flex: none; background: #484848; padding-top: 1px; }
.lscroll { flex: 1; background: #3e3e3e; }
.layer { display: flex; border-bottom: 1px solid #3a3a3a; background: #535353; }
.h23 { height: 23px; }
.h24 { height: 24px; }
.h30 { height: 30px; }
.h32 { height: 32px; }
.eye { width: 30px; flex: none; display: flex; align-items: center; justify-content: center; border-right: 1px solid #3f3f3f; }
.lmain { flex: 1; display: flex; align-items: center; font-size: 11px; color: #eee; }
.lmain.sel { background: #566578; }
.i0 { padding-left: 4px; }
.i1 { padding-left: 20px; }
.i2 { padding-left: 21px; }
.i3 { padding-left: 3px; }
.tri-d { width: 0; border: 5px solid transparent; border-top: 7px solid #ddd; border-bottom: 0; }
.tri-r { width: 0; border: 5px solid transparent; border-left: 7px solid #ddd; border-right: 0; }
.fold { margin-left: 4px; flex: none; }
.i2 .fold { margin-left: 6px; }
.n1 { margin-left: 10px; }
.n2 { margin-left: 8px; }
.n3 { margin-left: 11px; }
.n4 { margin-left: 9px; }
.thumb { width: 32px; height: 24px; flex: none; border: 1px solid #111; }
.checker { background-color: #fff; background-image: conic-gradient(#ccc 25%, #fff 0 50%, #ccc 0 75%, #fff 0); background-size: 10px 10px; }
.black { background: #0d0c0b; border: 1px solid #444; outline: 1px solid #ddd; }
.white { background: #fff; height: 26px; }
```
